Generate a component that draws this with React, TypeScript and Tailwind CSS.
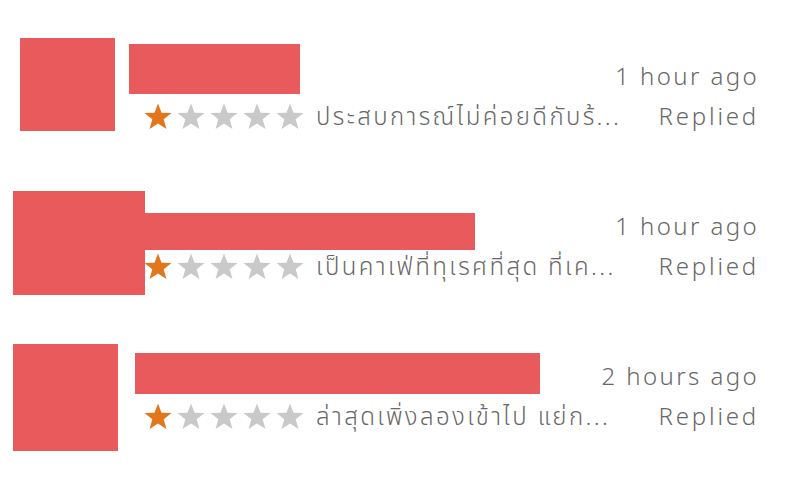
import React from "react";

const Star = ({ on }: { on: boolean }) => (
  <svg width="30" height="29" viewBox="0 0 24 24" className={on ? "text-[#e2761b]" : "text-[#c9c9c9]"}>
    <path fill="currentColor" d="M12 1.2l2.9 7.7 8.3.3-6.5 5.1 2.3 8L12 17.7l-7 4.6 2.3-8-6.5-5.1 8.3-.3z" />
  </svg>
);

type Row = {
  time: string;
  text: string;
  boxes: { cls: string }[];
};

const rows: Row[] = [
  {
    time: "1 hour ago",
    text: "ประสบการณ์ไม่ค่อยดีกับร้...",
    boxes: [
      { cls: "left-[20px] top-[38px] w-[95px] h-[93px]" },
      { cls: "left-[129px] top-[44px] w-[171px] h-[50px]" },
    ],
  },
  {
    time: "1 hour ago",
    text: "เป็นคาเฟ่ที่ทุเรศที่สุด ที่เค...",
    boxes: [
      { cls: "left-[13px] top-[41px] w-[132px] h-[104px]" },
      { cls: "left-[145px] top-[63px] w-[330px] h-[37px]" },
    ],
  },
  {
    time: "2 hours ago",
    text: "ล่าสุดเพิ่งลองเข้าไป แย่ก...",
    boxes: [
      { cls: "left-[13px] top-[44px] w-[105px] h-[107px]" },
      { cls: "left-[135px] top-[53px] w-[405px] h-[41px]" },
    ],
  },
];

export default function App() {
  return (
    <div
      className="w-[800px] h-[483px] bg-white overflow-hidden text-[#686868] font-light"
      style={{ fontFamily: '"Noto Sans", "Noto Sans Thai", "Liberation Sans", sans-serif' }}
    >
      {rows.map((r, i) => (
        <div key={i} className="relative h-[150px] pl-[143px] pr-[41px] pt-[61px]">
          <div className="flex justify-end h-[30px] items-center text-[24px] leading-none tracking-[2.4px]">{r.time}</div>
          <div className="flex items-center h-[30px] mt-[10px]">
            <div className="flex items-center gap-[3px]">
              {[0, 1, 2, 3, 4].map((s) => (
                <Star key={s} on={s === 0} />
              ))}
            </div>
            <div className="ml-[11px] text-[24px] leading-none whitespace-nowrap tracking-[2.4px]">{r.text}</div>
            <div className="flex-1" />
            <div className="text-[24px] leading-none tracking-[2.8px]">Replied</div>
          </div>
          {r.boxes.map((b, j) => (
            <div key={j} className={"absolute bg-[#e85a5b] " + b.cls} />
          ))}
        </div>
      ))}
    </div>
  );
}
